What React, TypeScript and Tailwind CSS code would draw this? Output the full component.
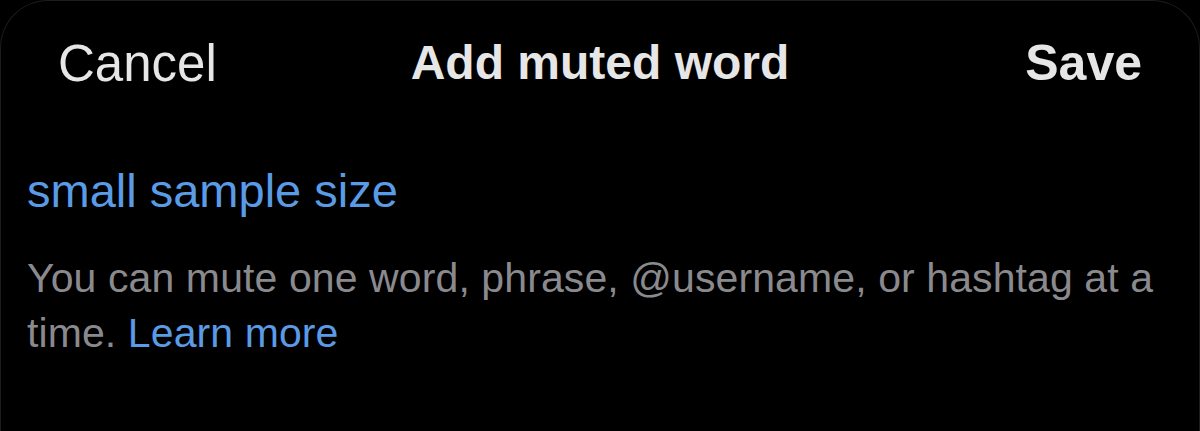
const MuteWordSheet = () => {
  return (
    <div className="w-[1200px] h-[431px] bg-black overflow-hidden">
      <div
        className="h-full rounded-t-[48px] border-t border-x border-[#1c1c1c] bg-black"
        style={{ fontFamily: '"Liberation Sans", Arial, sans-serif' }}
      >
        {/* header */}
        <div className="h-[124px] grid grid-cols-[1fr_auto_1fr] items-center px-[57px] text-[#e6e6e6]">
          <button className="justify-self-start text-[51px] leading-none">Cancel</button>
          <h1 className="text-[48px] font-bold leading-none">Add muted word</h1>
          <button className="justify-self-end text-[50px] font-bold leading-none">Save</button>
        </div>

        <div className="px-[26px]">
          <div className="mt-[38px] text-[47px] leading-[56px] text-[#5a9be6]">
            small sample size
          </div>
          <p className="mt-[32px] text-[41px] leading-[55px] tracking-[0.1px] text-[#8a8a8e]">
            You can mute one word, phrase, @username, or hashtag at a time.{" "}
            <a href="#" className="text-[#5a9be6]">
              Learn more
            </a>
          </p>
        </div>
      </div>
    </div>
  );
};

export default function App() {
  return <MuteWordSheet />;
}
